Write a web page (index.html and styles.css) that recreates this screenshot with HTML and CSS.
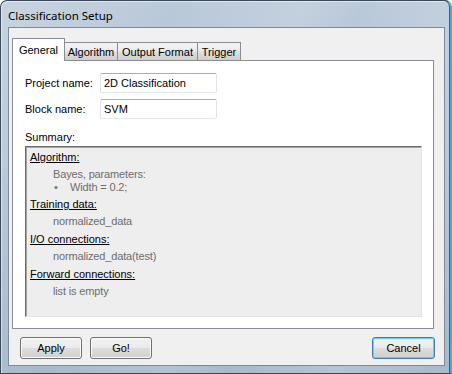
FILE: index.html
```html
<!DOCTYPE html>
<html>
<head>
<meta charset="utf-8">
<link rel="stylesheet" href="styles.css">
</head>
<body>
<div class="window">
  <div class="titlebar"><span class="title">Classification Setup</span></div>
  <div class="client">
    <div class="tabs">
      <div class="tab active tab-general">General</div>
      <div class="tab tab-algorithm">Algorithm</div>
      <div class="tab tab-output">Output Format</div>
      <div class="tab tab-trigger">Trigger</div>
    </div>
    <div class="panel">
      <div class="row">
        <span class="label">Project name:</span>
        <div class="input">2D Classification</div>
      </div>
      <div class="row">
        <span class="label">Block name:</span>
        <div class="input">SVM</div>
      </div>
      <div class="summary-label">Summary:</div>
      <div class="summary">
        <div class="section">
          <div class="head">Algorithm:</div>
          <div class="items">
            <div class="item">Bayes, parameters:</div>
            <div class="item bullet"><span class="dot">•</span><span>Width = 0.2;</span></div>
          </div>
        </div>
        <div class="section">
          <div class="head">Training data:</div>
          <div class="items">
            <div class="item">normalized_data</div>
          </div>
        </div>
        <div class="section">
          <div class="head">I/O connections:</div>
          <div class="items">
            <div class="item">normalized_data(test)</div>
          </div>
        </div>
        <div class="section">
          <div class="head">Forward connections:</div>
          <div class="items">
            <div class="item">list is empty</div>
          </div>
        </div>
      </div>
    </div>
    <div class="buttons">
      <div class="btn btn-apply">Apply</div>
      <div class="btn btn-go">Go!</div>
      <div class="btn btn-cancel">Cancel</div>
    </div>
  </div>
</div>
</body>
</html>
```
FILE: styles.css
```css
html, body {
  margin: 0;
  padding: 0;
  background: #ffffff;
}

.window {
  box-sizing: border-box;
  width: 452px;
  height: 374px;
  border: 1px solid #3b4859;
  border-right: 2px solid #2cb6ee;
  border-radius: 7px 7px 0 0;
  background:
    linear-gradient(110deg, rgba(255,255,255,0.2) 0%, rgba(255,255,255,0) 30%, rgba(255,255,255,0.14) 52%, rgba(255,255,255,0) 62%, rgba(255,255,255,0.16) 80%, rgba(255,255,255,0) 100%),
    linear-gradient(180deg, #bac9d9 0%, #a6b9cd 100%);
  box-shadow: inset -1px 0 0 #4a5a6e, inset 1px 1px 0 rgba(255,255,255,0.5);
  display: flex;
  flex-direction: column;
  overflow: hidden;
}

.titlebar {
  height: 26px;
  flex: none;
  display: flex;
  align-items: center;
  padding-left: 7px;
}

.title {
  font-family: "Noto Sans", "Open Sans", sans-serif;
  font-size: 11.5px;
  color: #000;
  position: relative;
  top: 1px;
}

.client {
  box-sizing: border-box;
  width: 437px;
  height: 339px;
  margin-left: 7px;
  flex: none;
  border: 1px solid #7d8a99;
  background: #f0f0f0;
  padding: 10px 10px 0 3px;
  display: flex;
  flex-direction: column;
  font-family: "Liberation Sans", Arial, sans-serif;
  font-size: 11px;
  color: #000;
}

.tabs {
  height: 22px;
  display: flex;
  align-items: flex-end;
  flex: none;
}

.tab {
  box-sizing: border-box;
  height: 18px;
  border: 1px solid #898c95;
  border-bottom: none;
  background: linear-gradient(180deg, #f3f3f3 0%, #ebebeb 45%, #dddddd 55%, #cfcfcf 100%);
  text-align: center;
  line-height: 18px;
  margin-left: -1px;
  white-space: nowrap;
}

.tab.active {
  position: relative;
  z-index: 1;
  height: 23px;
  margin-bottom: -1px;
  margin-left: 0;
  background: #ffffff;
  line-height: 22px;
  padding-bottom: 4px;
}

.tab-general { width: 53px; }
.tab-algorithm { width: 54px; }
.tab-output { width: 81px; }
.tab-trigger { width: 44px; }

.panel {
  box-sizing: border-box;
  width: 422px;
  height: 269px;
  flex: none;
  border: 1px solid #898c95;
  background: #ffffff;
  padding: 12px 10px 0 12px;
  display: flex;
  flex-direction: column;
}

.row {
  display: flex;
  align-items: center;
  height: 20px;
  margin-bottom: 6px;
}

.label {
  width: 75px;
  flex: none;
}

.input {
  box-sizing: border-box;
  width: 117px;
  height: 20px;
  border: 1px solid #dbdfe6;
  border-top-color: #abadb3;
  border-left-color: #e2e3ea;
  border-right-color: #e2e3ea;
  border-bottom-color: #e3e9ef;
  border-radius: 2px;
  background: #fff;
  padding-left: 3px;
  line-height: 18px;
}

.summary-label {
  margin-top: 6px;
  line-height: 13px;
  height: 13px;
}

.summary {
  box-sizing: border-box;
  margin-top: 2px;
  width: 397px;
  height: 171px;
  background: #eeeeee;
  border: 1px solid;
  border-color: #6d6d6d #e2e2e2 #e2e2e2 #6d6d6d;
  box-shadow: inset 1px 1px 0 #a3a3a3;
  padding: 4px 0 0 4px;
}

.section + .section {
  margin-top: 5px;
}

.head {
  line-height: 13px;
  text-decoration: underline;
  color: #000;
}

.items {
  margin-top: 4px;
  margin-left: 23px;
  color: #6d6d6d;
  letter-spacing: -0.15px;
}

.item {
  line-height: 13px;
}

.item.bullet {
  display: flex;
  line-height: 12px;
}

.dot {
  width: 16px;
  padding-left: 1px;
  flex: none;
}

.buttons {
  display: flex;
  margin-top: 8px;
  height: 22px;
  flex: none;
  padding-left: 8px;
  padding-right: 9px;
  margin-left: -3px;
  margin-right: -10px;
}

.btn {
  box-sizing: border-box;
  width: 62px;
  height: 22px;
  border: 1px solid #707070;
  border-radius: 3px;
  background: linear-gradient(180deg, #f2f2f2 0%, #ebebeb 48%, #dddddd 52%, #cfcfcf 100%);
  box-shadow: inset 0 0 0 1px #fbfbfb;
  text-align: center;
  line-height: 20px;
}

.btn-apply { margin-left: 3px; }
.btn-go { margin-left: 8px; }

.btn-cancel {
  margin-left: auto;
  width: 63px;
  border-color: #3c7fb1;
  box-shadow: inset 0 0 0 1px #62d0f7;
}
```
